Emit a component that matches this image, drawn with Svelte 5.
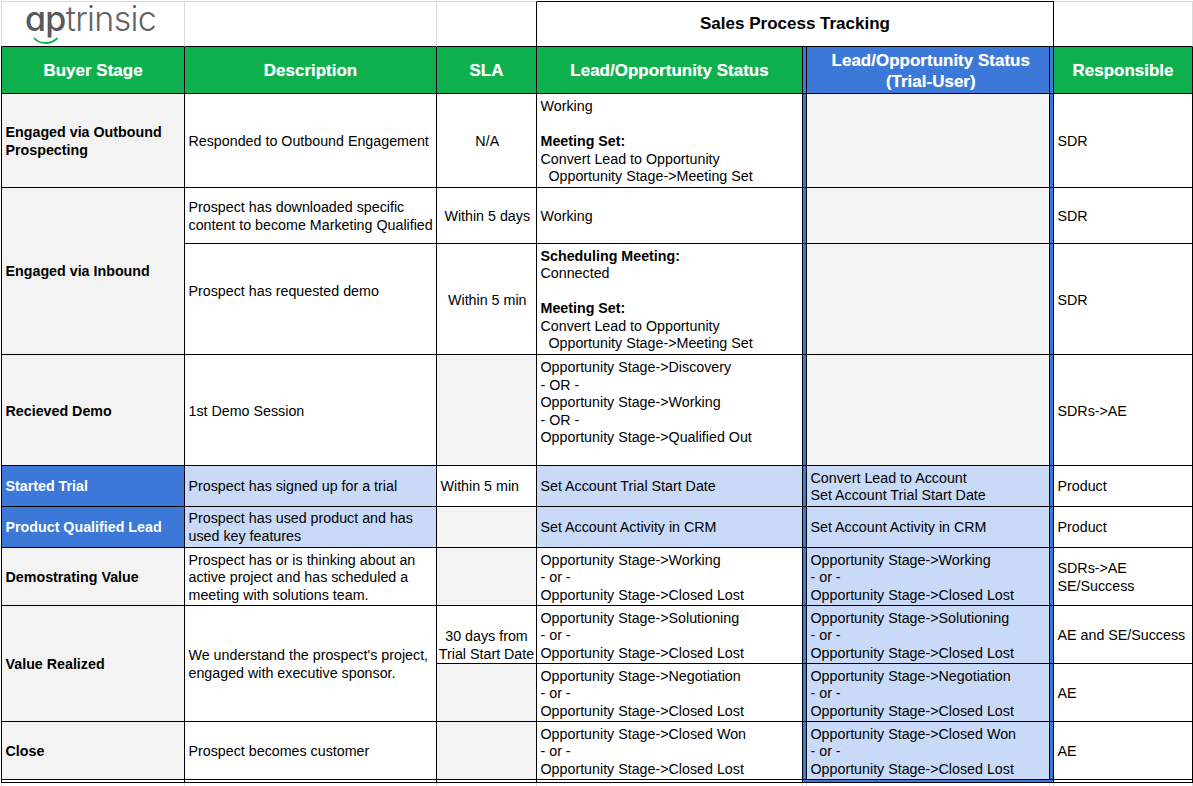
<script>
  const arrow = '->';
</script>

<table>
  <colgroup>
    <col class="c1" /><col class="c2" /><col class="c3" /><col class="c4" /><col class="c5" /><col class="c6" />
  </colgroup>
  <tbody>
    <tr class="r-top">
      <td class="first soft logo-cell">
        <div class="logo">
          <span class="logo-text"><span class="logo-ap">ap</span>trinsic</span>
          <svg class="smile" viewBox="0 0 26 8" width="26" height="8" aria-hidden="true">
            <path d="M1.5 1.5 C7 7.5 18 7.5 24 1.5" fill="none" stroke="#0eb04e" stroke-width="1.8" stroke-linecap="round" />
          </svg>
        </div>
      </td>
      <td class="soft"></td>
      <td class="soft soft-top-black-right"></td>
      <td class="sales" colspan="2">Sales Process Tracking</td>
      <td class="soft-last"></td>
    </tr>
    <tr class="r-head">
      <th class="first green">Buyer Stage</th>
      <th class="green">Description</th>
      <th class="green">SLA</th>
      <th class="green">Lead/Opportunity Status</th>
      <th class="blue trial">Lead/Opportunity Status<br />(Trial-User)</th>
      <th class="green">Responsible</th>
    </tr>
    <tr class="r1">
      <td class="first grey b">Engaged via Outbound Prospecting</td>
      <td>Responded to Outbound Engagement</td>
      <td class="ctr">N/A</td>
      <td>Working<br /><br /><b>Meeting Set:</b><br />Convert Lead to Opportunity<br />&nbsp;&nbsp;Opportunity Stage{arrow}Meeting Set</td>
      <td class="grey trial"></td>
      <td>SDR</td>
    </tr>
    <tr class="r2">
      <td class="first grey b inbound" rowspan="2">Engaged via Inbound</td>
      <td>Prospect has downloaded specific content to become Marketing Qualified</td>
      <td class="ctr">Within 5 days</td>
      <td>Working</td>
      <td class="grey trial"></td>
      <td>SDR</td>
    </tr>
    <tr class="r3">
      <td class="up">Prospect has requested demo</td>
      <td class="ctr">Within 5 min</td>
      <td><b>Scheduling Meeting:</b><br />Connected<br /><br /><b>Meeting Set:</b><br />Convert Lead to Opportunity<br />&nbsp;&nbsp;Opportunity Stage{arrow}Meeting Set</td>
      <td class="grey trial"></td>
      <td>SDR</td>
    </tr>
    <tr class="r4">
      <td class="first grey b">Recieved Demo</td>
      <td>1st Demo Session</td>
      <td class="grey"></td>
      <td class="top">Opportunity Stage{arrow}Discovery<br />- OR -<br />Opportunity Stage{arrow}Working<br />- OR -<br />Opportunity Stage{arrow}Qualified Out</td>
      <td class="grey trial"></td>
      <td>SDRs{arrow}AE</td>
    </tr>
    <tr class="r5">
      <td class="first blue b">Started Trial</td>
      <td class="light">Prospect has signed up for a trial</td>
      <td>Within 5 min</td>
      <td class="light">Set Account Trial Start Date</td>
      <td class="light trial">Convert Lead to Account<br />Set Account Trial Start Date</td>
      <td>Product</td>
    </tr>
    <tr class="r6">
      <td class="first blue b">Product Qualified Lead</td>
      <td class="light">Prospect has used product and has used key features</td>
      <td class="grey"></td>
      <td class="light">Set Account Activity in CRM</td>
      <td class="light trial">Set Account Activity in CRM</td>
      <td>Product</td>
    </tr>
    <tr class="r7">
      <td class="first grey b">Demostrating Value</td>
      <td>Prospect has or is thinking about an active project and has scheduled a meeting with solutions team.</td>
      <td class="grey"></td>
      <td>Opportunity Stage{arrow}Working<br />- or -<br />Opportunity Stage{arrow}Closed Lost</td>
      <td class="light trial">Opportunity Stage{arrow}Working<br />- or -<br />Opportunity Stage{arrow}Closed Lost</td>
      <td>SDRs{arrow}AE<br />SE/Success</td>
    </tr>
    <tr class="r8">
      <td class="first grey b" rowspan="2">Value Realized</td>
      <td rowspan="2">We understand the prospect's project, engaged with executive sponsor.</td>
      <td class="ctr bottom">30 days from<br />Trial Start Date</td>
      <td>Opportunity Stage{arrow}Solutioning<br />- or -<br />Opportunity Stage{arrow}Closed Lost</td>
      <td class="light trial">Opportunity Stage{arrow}Solutioning<br />- or -<br />Opportunity Stage{arrow}Closed Lost</td>
      <td>AE and SE/Success</td>
    </tr>
    <tr class="r9">
      <td class="grey"></td>
      <td>Opportunity Stage{arrow}Negotiation<br />- or -<br />Opportunity Stage{arrow}Closed Lost</td>
      <td class="light trial">Opportunity Stage{arrow}Negotiation<br />- or -<br />Opportunity Stage{arrow}Closed Lost</td>
      <td>AE</td>
    </tr>
    <tr class="r10">
      <td class="first grey b">Close</td>
      <td>Prospect becomes customer</td>
      <td class="grey"></td>
      <td>Opportunity Stage{arrow}Closed Won<br />- or -<br />Opportunity Stage{arrow}Closed Lost</td>
      <td class="light trial">Opportunity Stage{arrow}Closed Won<br />- or -<br />Opportunity Stage{arrow}Closed Lost</td>
      <td>AE</td>
    </tr>
    <tr class="r-gap">
      <td class="first"></td><td></td><td></td><td></td><td class="trial-end"></td><td></td>
    </tr>
    <tr class="r-tail">
      <td class="tail first"></td><td class="tail"></td><td class="tail"></td><td class="tail"></td><td class="tail trial-tail"></td><td class="tail"></td>
    </tr>
  </tbody>
</table>

<style>
  :global(body) {
    margin: 0;
    background: #fff;
  }
  table {
    table-layout: fixed;
    width: 1192px;
    margin: 1px 0 0 1px;
    border-collapse: separate;
    border-spacing: 0;
    font-family: "Liberation Sans", Arial, sans-serif;
    font-size: 14.27px;
    line-height: 17.5px;
    color: #000;
  }
  .c1 { width: 184px; }
  .c2 { width: 252px; }
  .c3 { width: 100px; }
  .c4 { width: 266px; }
  .c5 { width: 251px; }
  .c6 { width: 139px; }

  td, th {
    box-sizing: border-box;
    padding: 2.5px 2px 0 3.5px;
    border-right: 1px solid #000;
    border-bottom: 1px solid #000;
    vertical-align: middle;
    text-align: left;
    overflow: hidden;
    font-weight: 400;
  }
  .first { border-left: 1px solid #000; }
  .b { font-weight: 700; }
  .ctr { text-align: center; }
  .bottom { vertical-align: bottom; padding: 0; }
  .up { padding-top: 0; padding-bottom: 15px; }
  .top { vertical-align: top; padding-top: 4px; }
  .inbound { padding-top: 1px; }
  .r5 td, .r6 td { padding-top: 1px; }
  .r5 .trial { padding-top: 2.5px; }
  .grey { background: #f3f3f3; }
  .light { background: #c9daf8; }
  .blue { background: #3c78d8; color: #fff; }
  .green { background: #0eb04e; color: #fff; }
  th {
    padding: 2px 2px 0;
    font-size: 17px;
    font-weight: 700;
    line-height: 21.5px;
    text-align: center;
    text-shadow: 0 0 1px rgba(255, 255, 255, 0.45);
  }
  .trial {
    padding-left: 7.5px;
    box-shadow:
      inset 3px 0 0 #3c78d8,
      inset 4px 0 0 #000,
      inset -3px 0 0 #3c78d8,
      inset -4px 0 0 #000;
  }
  .r-top td { border-top: 1px solid #d9d9d9; border-bottom-color: #000; }
  .soft { border-right-color: #d9d9d9; }
  .soft.first { border-left-color: #d9d9d9; }
  .soft-top-black-right { border-right-color: #000; }
  .soft-last { border-right-color: #d9d9d9; }
  .r-top .sales {
    padding: 0 2px 1px;
    border-top-color: #000;
    text-align: center;
    font-size: 17px;
    font-weight: 700;
  }

  td.logo-cell { padding: 0; overflow: visible; }
  .logo {
    position: relative;
    height: 44px;
  }
  .logo-text {
    position: absolute;
    left: 23px;
    top: -2px;
    font-family: Inter, Lato, sans-serif;
    font-feature-settings: "cv11" 1;
    font-weight: 300;
    font-size: 34px;
    line-height: 38px;
    letter-spacing: -0.67px;
    color: #636466;
    white-space: nowrap;
  }
  .logo-ap { font-weight: 500; color: #58595b; }
  .smile { position: absolute; left: 31px; top: 35px; }

  .r-top { height: 46px; }
  .r-head { height: 47px; }
  .r1 { height: 94px; }
  .r2 { height: 56px; }
  .r3 { height: 111px; }
  .r4 { height: 111px; }
  .r5 { height: 41px; }
  .r6 { height: 41px; }
  .r7, .r8, .r9, .r10 { height: 58px; }
  .r-gap { height: 3px; }
  .r-gap td { padding: 0; line-height: 0; font-size: 0; }
  .trial-end { background: #3c78d8; }
  .r-tail { height: 3px; }
  .tail {
    padding: 0;
    line-height: 0;
    font-size: 0;
    border-bottom: 0;
    border-right-color: #d9d9d9;
  }
  .tail.first { border-left-color: #d9d9d9; }
  .trial-tail {
    box-shadow:
      inset 3px 0 0 #fff,
      inset 4px 0 0 #d9d9d9,
      inset -3px 0 0 #fff,
      inset -4px 0 0 #d9d9d9;
  }
</style>
